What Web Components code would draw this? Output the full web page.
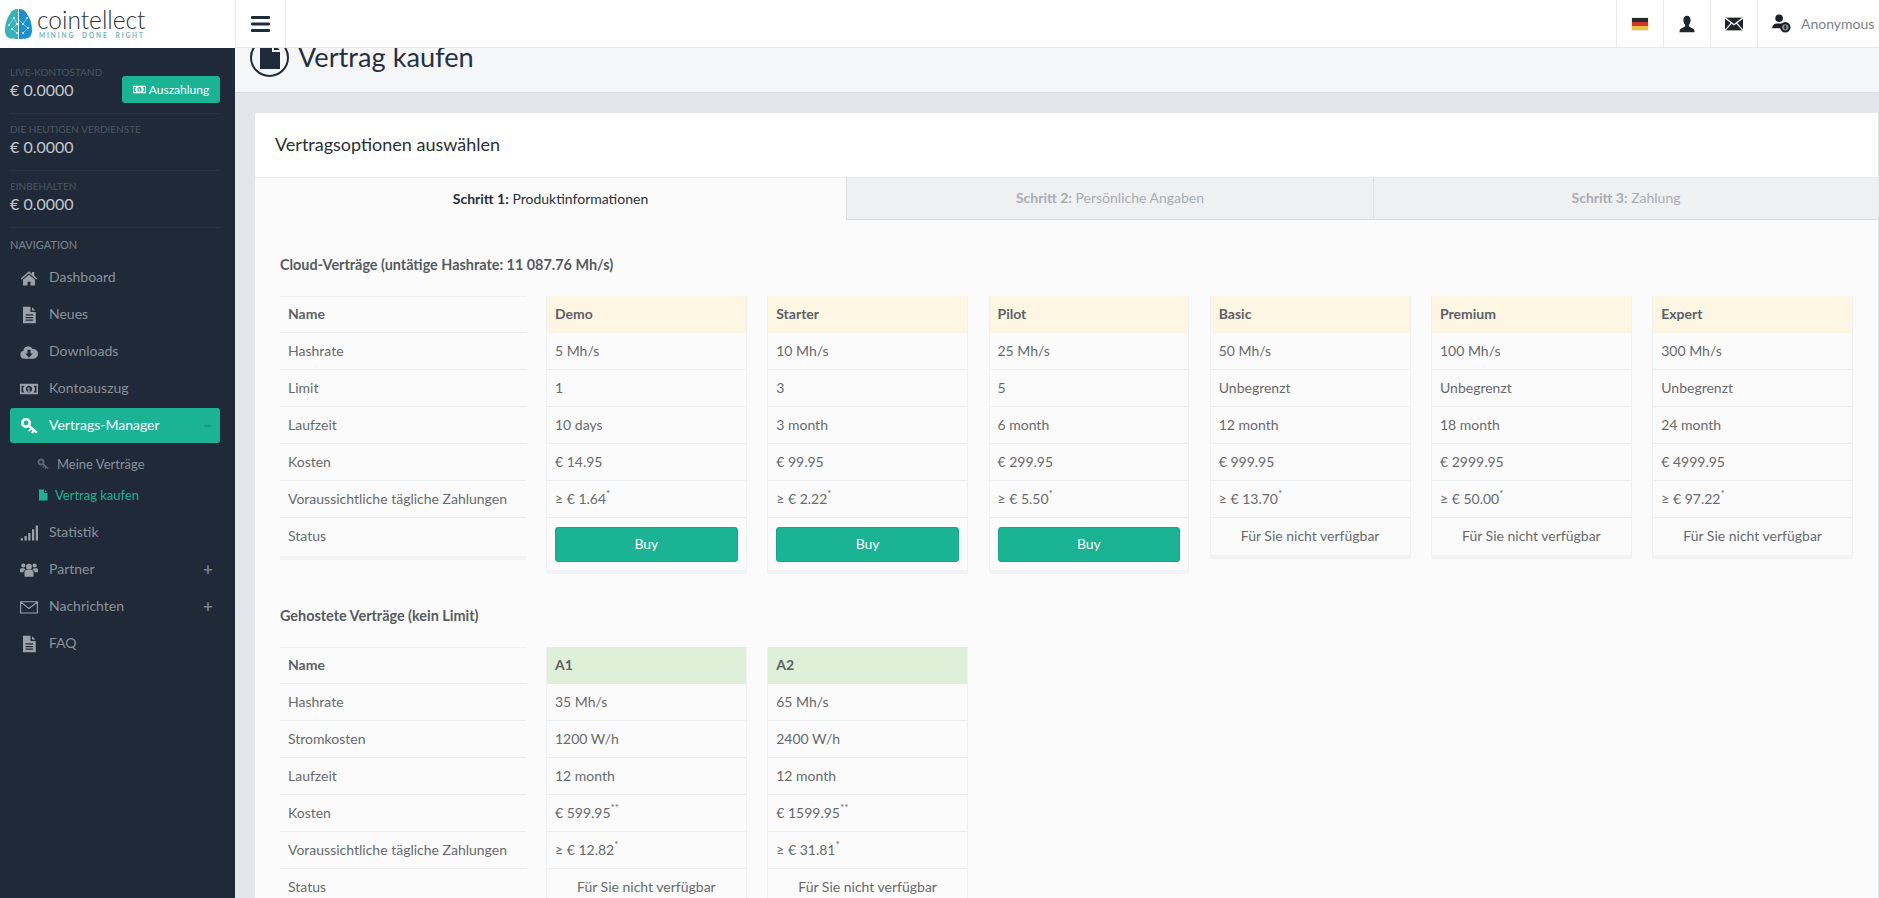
<!DOCTYPE html>
<html lang="de">
<head>
<meta charset="utf-8">
<title>Vertrag kaufen</title>
<style>
    html, body { margin: 0; height: 100%; overflow: hidden; }
    body { font-family: Lato, "Open Sans", sans-serif; font-size: 14px; color: #676a6c; }
</style>
</head>
<body>
<ci-app></ci-app>

<script>
const ICONS = {
    home: '<path d="M12 3 1 12.6l1.3 1.500L12 5.800l9.700 8.300 1.300-1.500-4-3.500V4h-3v2.800z"/><path d="M12 7.600 4 14.400V22h6v-5h4v5h6v-7.600z"/>',
    file: '<path fill-rule="evenodd" d="M4 1h10v7h7v15H4zM16 1.500 20.500 6H16zM7.500 11v1.800h10V11zm0 3.500v1.800h10v-1.800zm0 3.500v1.800h10V18z"/>',
    plainfile: '<path d="M4 1h10v7h7v15H4zM16 1.500 20.500 6H16z"/>',
    cloud: '<path fill-rule="evenodd" d="M6 21a5.500 5.500 0 0 1-1.500-10.800A6.500 6.500 0 0 1 16.700 8 6.500 6.500 0 0 1 18.500 21zM10 9v5H7l5 5.500 5-5.500h-3V9z"/>',
    money: '<path fill-rule="evenodd" d="M0 5h24v14H0zM2 7.500v9h4a6 6 0 0 1 0-9zM22 7.500h-4a6 6 0 0 1 0 9h4zM12 7.500a4 4.500 0 1 0 .01 0zM11 10h1.800v4.500h1v1h-3.800v-1h1v-3l-1 .6-.5-.9z"/>',
    key: '<g fill="none" stroke="currentColor" stroke-linecap="round"><circle cx="8" cy="8" r="5" stroke-width="3.600"/><path stroke-width="3.200" d="M11.500 11.500 21.500 20"/><path stroke-width="2.600" d="M15 15l-2.500 3M18.500 17.800l-2 2.700"/></g>',
    bars: '<rect x="1" y="19" width="3" height="3"/><rect x="6" y="16" width="3" height="6"/><rect x="11" y="12" width="3" height="10"/><rect x="16" y="7" width="3" height="15"/><rect x="21" y="2" width="3" height="20"/>',
    users: '<circle cx="12" cy="7.500" r="3.800"/><circle cx="4.500" cy="6" r="2.800"/><circle cx="19.500" cy="6" r="2.800"/><path d="M6 21v-5.500c0-2.500 1.500-3.700 3-3.700h6c1.500 0 3 1.200 3 3.700V21z"/><path d="M0 15v-3.500C0 10 1 9.500 2.500 9.500h3.300c.3 1 .9 1.800 1.700 2.300C5.500 12.300 4.600 13.500 4.500 15zM24 15v-3.500c0-1.500-1-2-2.500-2h-3.300c-.3 1-.9 1.800-1.700 2.300 2 .5 2.900 1.700 3 3.200z"/>',
    envelope: '<path fill="none" stroke="currentColor" stroke-width="1.500" d="M.8 5h22.400v15H.8zM1 5.500l11 8.500 11-8.500"/>',
    person: '<path d="M12 1c3 0 4.800 2.300 4.800 5.500 0 2.500-1 5-2.300 6.500v1.800c0 1 2 1.600 4.500 2.700 2 .9 3 1.700 3 5.500H2c0-3.800 1-4.600 3-5.500 2.500-1.100 4.500-1.700 4.500-2.700V13C8.200 11.500 7.200 9 7.200 6.500 7.200 3.300 9 1 12 1z"/>',
    mail: '<path d="M0 3.500h24v17H0z"/><path fill="none" stroke="#fff" stroke-width="1.700" d="M0 3.800 12 13 24 3.800M0 20.500l8.800-10M24 20.500l-8.800-10"/>'
};

function icon(name, size) {
    return `<svg viewBox="0 0 24 24" width="${size}" height="${size}" fill="currentColor">${ICONS[name]}</svg>`;
}

class CiLogo extends HTMLElement {
    constructor() {
        super();
        this.attachShadow({ mode: 'open' });
        this.shadowRoot.innerHTML = `
        <style>
            :host { display: flex; align-items: center; width: 235px; height: 48px; box-sizing: border-box; padding-left: 5px; gap: 5px; background: #fff; }
            .words { display: flex; flex-direction: column; margin-top: -2px; }
            .name { font-size: 24.500px; font-weight: 300; line-height: 24px; color: #2b3038; }
            .tag { font-size: 6.500px; line-height: 7px; letter-spacing: 1.900px; color: #6fb4bd; margin-left: 2px; white-space: pre; font-weight: 700; }
        </style>
        <svg width="27" height="30" viewBox="0 0 27 30">
            <path d="M13 0C9 0 6.500 1.800 5 5 2 9 0 15 0 21c0 5 2 8 6 8.500 3 .4 7 .5 7 .5z" fill="#34b3b8"/>
            <path d="M14 0c4 0 6.500 1.800 8 5 3 4 5 10 5 16 0 5-2 8-6 8.500-3 .4-7 .5-7 .5z" fill="#1b8fcf"/>
            <g stroke="#bfe9ee" stroke-width=".6" fill="none">
                <path d="M4 16 9 9l3 6-5 5 5 4M22 9l-4 6 5 4-5 5M14 11l4 4"/>
            </g>
            <g fill="#dff6f8">
                <circle cx="9" cy="9" r="1"/><circle cx="4" cy="16" r="1"/><circle cx="12" cy="15" r="1"/><circle cx="7" cy="20" r="1"/><circle cx="12" cy="24" r="1"/>
                <circle cx="22" cy="9" r="1"/><circle cx="18" cy="15" r="1"/><circle cx="23" cy="19" r="1"/><circle cx="18" cy="24" r="1"/>
            </g>
        </svg>
        <div class="words">
            <span class="name">cointellect</span>
            <span class="tag">MINING  DONE  RIGHT</span>
        </div>
        `;
    }
}

class CiTopbar extends HTMLElement {
    constructor() {
        super();
        this.attachShadow({ mode: 'open' });
        this.shadowRoot.innerHTML = `
        <style>
            :host { display: flex; height: 48px; box-sizing: border-box; background: #fff; position: relative; z-index: 2; }
            .line { display: flex; flex: 1; height: 48px; border-bottom: 1px solid #e7eaec; box-sizing: border-box; }
            .cell { display: flex; align-items: center; justify-content: center; width: 47px; box-sizing: border-box; border-left: 1px solid #e7eaec; color: #20242c; }
            .burger { width: 51px; border-right: 1px solid #e7eaec; }
            .burger i { display: block; width: 19px; height: 3px; border-radius: 1px; background: #1f2a3a; box-shadow: 0 6.500px 0 #1f2a3a, 0 13px 0 #1f2a3a; margin-top: -13px; }
            .space { flex: 1; }
            .user { width: 122px; justify-content: flex-start; padding-left: 14px; gap: 10px; color: #7b8188; font-size: 14px; }
            .flag { width: 16px; height: 12px; background: linear-gradient(#2a2a2a 0 33%, #d5322a 33% 66%, #eec13d 66%); box-shadow: 0 0 1px #8b7b55; }
            .user svg { color: #1c2028; flex: none; }
        </style>
        <slot name="logo"></slot>
        <div class="line">
            <div class="cell burger"><i></i></div>
            <div class="space"></div>
            <div class="cell"><span class="flag"></span></div>
            <div class="cell">${icon('person', 18)}</div>
            <div class="cell">${icon('mail', 18)}</div>
            <div class="cell user">
                <svg viewBox="0 0 20 20" width="19" height="19" fill="currentColor">
                    <circle cx="7.500" cy="4.500" r="4"/>
                    <path d="M0 15c.3-3 2.500-5 5-5h5c1 0 1.800.3 2.500.8A6 6 0 0 0 9 15z"/>
                    <circle cx="14" cy="14" r="5.500"/>
                    <circle cx="14" cy="14" r="3.300" fill="#8f949a"/>
                    <rect x="13" y="12" width="2" height="4" fill="#1c2028"/>
                </svg>
                <span>Anonymous</span>
            </div>
        </div>
        `;
    }
}

class CiStat extends HTMLElement {
    constructor() {
        super();
        this.attachShadow({ mode: 'open' });
        this.shadowRoot.innerHTML = `
        <style>
            :host { display: flex; align-items: flex-start; justify-content: space-between; height: 57px; box-sizing: border-box; border-bottom: 1px solid #273345; padding-top: 9px; }
            .label { font-size: 10px; line-height: 12px; color: #4a5666; }
            .value { font-size: 16px; line-height: 22px; margin-top: 1px; color: #c3c7cd; }
        </style>
        <div>
            <div class="label">${this.getAttribute('label')}</div>
            <div class="value">${this.getAttribute('value')}</div>
        </div>
        <slot></slot>
        `;
    }
}

class CiButton extends HTMLElement {
    constructor() {
        super();
        this.attachShadow({ mode: 'open' });
        this.shadowRoot.innerHTML = `
        <style>
            :host { display: inline-flex; align-items: center; justify-content: center; background: #1ab394; color: #fff; border-radius: 3px; box-sizing: border-box; font-size: 14px; }
            :host([small]) { width: 98px; height: 27px; gap: 3px; font-size: 12px; margin-top: 10px; }
            :host([block]) { display: flex; height: 35px; margin: 9px 8px 8px; border: 1px solid #18a689; padding-bottom: 2px; }
        </style>
        <slot></slot>
        `;
    }
}

class CiNavItem extends HTMLElement {
    constructor() {
        super();
        this.attachShadow({ mode: 'open' });
        const trail = this.getAttribute('trail') || '';
        this.shadowRoot.innerHTML = `
        <style>
            :host { display: flex; align-items: center; height: 37px; padding-left: 10px; width: 210px; box-sizing: border-box; color: #8a929c; font-size: 14px; }
            :host([active]) { height: 35px; margin: 1px 0; background: #1ab394; color: #fff; border-radius: 3px; }
            :host([sub]) { height: 31px; padding-left: 27px; font-size: 13px; }
            :host([sub][current]) { color: #1ab394; }
            .ico { display: flex; width: 29px; flex: none; justify-content: flex-start; margin-top: 1px; color: #9aa1aa; }
            :host([active]) .ico { color: #fff; }
            :host([sub]) .ico { width: 20px; color: #5d6672; }
            :host([sub][current]) .ico { width: 18px; color: #1ab394; }
            .text { flex: 1; margin-top: -2px; }
            :host([sub]) .text { margin-top: 0; }
            .trail { width: 17px; font-size: 17px; font-weight: 700; line-height: 1; color: #777f89; margin-top: -2px; }
            :host([active]) .trail { color: #18957e; }
        </style>
        <span class="ico">${icon(this.getAttribute('icon'), this.hasAttribute('sub') ? 12 : 18)}</span>
        <span class="text"><slot></slot></span>
        <span class="trail">${trail}</span>
        `;
    }
}

class CiSidebar extends HTMLElement {
    constructor() {
        super();
        this.attachShadow({ mode: 'open' });
        this.shadowRoot.innerHTML = `
        <style>
            :host { display: block; background: #1f2937; padding: 9px 15px 0 10px; overflow: hidden; box-sizing: border-box; }
            .head { font-size: 11px; color: #7c8590; line-height: 14px; padding: 10px 0 7px; }
        </style>
        <slot name="stats"></slot>
        <div class="head">NAVIGATION</div>
        <slot></slot>
        `;
    }
}

class CiNavGroup extends HTMLElement {
    constructor() {
        super();
        this.attachShadow({ mode: 'open' });
        this.shadowRoot.innerHTML = `
        <style>
            :host { display: flex; flex-direction: column; padding: 4px 0; }
        </style>
        <slot></slot>
        `;
    }
}

class CiHeading extends HTMLElement {
    constructor() {
        super();
        this.attachShadow({ mode: 'open' });
        this.shadowRoot.innerHTML = `
        <style>
            :host { display: block; height: 44px; overflow: hidden; background: #f5f6f7; border-bottom: 1px solid #d9dde1; flex: none; }
            .row { display: flex; align-items: center; gap: 9px; height: 40px; margin: -11px 0 0 15px; }
            .round { width: 39px; height: 39px; border: 2px solid #1f2a3a; border-radius: 50%; box-sizing: border-box; display: flex; align-items: center; justify-content: center; color: #1f2a3a; flex: none; }
            h1 { margin: 0; font-size: 27.200px; line-height: 18px; font-weight: 400; color: #26303e; }
        </style>
        <div class="row">
            <span class="round"><svg viewBox="0 0 20 24" width="20" height="24" fill="currentColor"><path d="M0 0h12v7h8v17H0zM14 0l6 5h-6z"/></svg></span>
            <h1><slot></slot></h1>
        </div>
        `;
    }
}

class CiTabs extends HTMLElement {
    constructor() {
        super();
        this.attachShadow({ mode: 'open' });
        this.shadowRoot.innerHTML = `
        <style>
            :host { display: grid; grid-template-columns: 591px 527px 1fr; height: 42px; font-size: 14px; }
            div { display: flex; align-items: center; justify-content: center; box-sizing: border-box; padding-bottom: 2px; background: #eef0f2; color: #a9adb2; border-bottom: 1px solid #d8dbde; border-left: 1px solid #dfe2e5; }
            b { font-weight: 700; }
            .on { background: transparent; color: #2a2f36; border: 0; }
        </style>
        <div class="on"><span><b>Schritt 1:</b> Produktinformationen</span></div>
        <div><span><b>Schritt 2:</b> Persönliche Angaben</span></div>
        <div><span><b>Schritt 3:</b> Zahlung</span></div>
        `;
    }
}

class CiPlan extends HTMLElement {
    constructor() {
        super();
        this.attachShadow({ mode: 'open' });
        const rows = JSON.parse(this.getAttribute('rows'));
        const kind = this.getAttribute('kind');
        const cells = rows.map(r => `<div class="cell">${r}</div>`).join('');
        let status = '<div class="cell none">Für Sie nicht verfügbar</div>';
        if (this.hasAttribute('buy')) {
            status = '<div class="buy"><slot></slot></div>';
        }
        this.shadowRoot.innerHTML = `
        <style>
            :host { display: block; align-self: start; box-sizing: border-box; border: 1px solid #f0f1f2; border-top: 0; border-bottom: 4px solid #f2f3f4; }
            .cell { height: 37px; box-sizing: border-box; padding: 0 8px; line-height: 36px; border-bottom: 1px solid #ebeced; white-space: nowrap; }
            .name { font-weight: 700; color: #5d6166; border-bottom: 0; }
            .kind-yellow { background: #fdf6e3; }
            .kind-green { background: #dff0d8; }
            .none { text-align: center; border-bottom: 0; }
            .buy { height: 52px; display: flow-root; }
            sup { font-size: 10px; line-height: 0; position: relative; top: -1px; vertical-align: super; }
        </style>
        <div class="cell name kind-${kind}">${this.getAttribute('name')}</div>
        ${cells}
        ${status}
        `;
    }
}

class CiLabels extends HTMLElement {
    constructor() {
        super();
        this.attachShadow({ mode: 'open' });
        const rows = this.getAttribute('rows').split('|');
        this.shadowRoot.innerHTML = `
        <style>
            :host { display: block; align-self: start; border-top: 1px solid #eff0f1; border-bottom: 4px solid #f2f3f4; }
            div { height: 37px; box-sizing: border-box; padding: 0 8px; line-height: 36px; border-bottom: 1px solid #ebeced; white-space: nowrap; }
            div:first-of-type { font-weight: 700; color: #5d6166; height: 36px; line-height: 34px; }
            div:last-child { border-bottom: 0; height: 38px; }
        </style>
        ${rows.map(r => `<div>${r}</div>`).join('')}
        `;
    }
}

class CiSection extends HTMLElement {
    constructor() {
        super();
        this.attachShadow({ mode: 'open' });
        this.shadowRoot.innerHTML = `
        <style>
            :host { display: block; }
            h2 { margin: 0; font-size: 14.400px; line-height: 18px; font-weight: 700; color: #555a60; padding-bottom: 22px; }
            .grid { display: grid; grid-template-columns: 245.500px repeat(6, 1fr); column-gap: 20.500px; }
        </style>
        <h2>${this.getAttribute('title')}</h2>
        <div class="grid"><slot></slot></div>
        `;
    }
}

class CiCard extends HTMLElement {
    constructor() {
        super();
        this.attachShadow({ mode: 'open' });
        this.shadowRoot.innerHTML = `
        <style>
            :host { display: block; background: #fbfbfb; border-radius: 3px 3px 0 0; overflow: hidden; }
            header { height: 65px; box-sizing: border-box; background: #fff; border-bottom: 1px solid #e7eaec; padding: 0 20px 2px; display: flex; align-items: center; font-size: 18px; color: #2a2f36; }
            .body { padding: 36px 25px 0; display: flex; flex-direction: column; gap: 33px; }
        </style>
        <header>${this.getAttribute('title')}</header>
        <slot name="tabs"></slot>
        <div class="body"><slot></slot></div>
        `;
    }
}

class CiApp extends HTMLElement {
    constructor() {
        super();
        this.attachShadow({ mode: 'open' });
        const labelsA = 'Name|Hashrate|Limit|Laufzeit|Kosten|Voraussichtliche tägliche Zahlungen|Status';
        const labelsB = 'Name|Hashrate|Stromkosten|Laufzeit|Kosten|Voraussichtliche tägliche Zahlungen|Status';
        const plan = (name, kind, rows, buy) => {
            const json = JSON.stringify(rows).replace(/"/g, '&quot;');
            return `<ci-plan name="${name}" kind="${kind}" rows="${json}" ${buy ? 'buy' : ''}>${buy ? '<ci-button block>Buy</ci-button>' : ''}</ci-plan>`;
        };
        this.shadowRoot.innerHTML = `
        <style>
            :host { display: grid; grid-template-columns: 235px 1fr; grid-template-rows: 48px 1fr; height: 100vh; overflow: hidden; }
            ci-topbar { grid-column: 1 / 3; }
            main { display: flex; flex-direction: column; background: #e3e7eb; overflow: hidden; min-width: 0; }
            .wrap { padding: 20px 1px 0 20px; }
        </style>
        <ci-topbar><ci-logo slot="logo"></ci-logo></ci-topbar>
        <ci-sidebar>
            <div slot="stats">
                <ci-stat label="LIVE-KONTOSTAND" value="€ 0.0000"><ci-button small>${icon('money', 13)}Auszahlung</ci-button></ci-stat>
                <ci-stat label="DIE HEUTIGEN VERDIENSTE" value="€ 0.0000"></ci-stat>
                <ci-stat label="EINBEHALTEN" value="€ 0.0000"></ci-stat>
            </div>
            <ci-nav-item icon="home">Dashboard</ci-nav-item>
            <ci-nav-item icon="file">Neues</ci-nav-item>
            <ci-nav-item icon="cloud">Downloads</ci-nav-item>
            <ci-nav-item icon="money">Kontoauszug</ci-nav-item>
            <ci-nav-item icon="key" active trail="–">Vertrags-Manager</ci-nav-item>
            <ci-nav-group>
                <ci-nav-item icon="key" sub>Meine Verträge</ci-nav-item>
                <ci-nav-item icon="plainfile" sub current>Vertrag kaufen</ci-nav-item>
            </ci-nav-group>
            <ci-nav-item icon="bars">Statistik</ci-nav-item>
            <ci-nav-item icon="users" trail="+">Partner</ci-nav-item>
            <ci-nav-item icon="envelope" trail="+">Nachrichten</ci-nav-item>
            <ci-nav-item icon="file">FAQ</ci-nav-item>
        </ci-sidebar>
        <main>
            <ci-heading>Vertrag kaufen</ci-heading>
            <div class="wrap">
                <ci-card title="Vertragsoptionen auswählen">
                    <ci-tabs slot="tabs"></ci-tabs>
                    <ci-section title="Cloud-Verträge (untätige Hashrate: 11 087.76 Mh/s)">
                        <ci-labels rows="${labelsA}"></ci-labels>
                        ${plan('Demo', 'yellow', ['5 Mh/s', '1', '10 days', '€ 14.95', '≥ € 1.64<sup>*</sup>'], true)}
                        ${plan('Starter', 'yellow', ['10 Mh/s', '3', '3 month', '€ 99.95', '≥ € 2.22<sup>*</sup>'], true)}
                        ${plan('Pilot', 'yellow', ['25 Mh/s', '5', '6 month', '€ 299.95', '≥ € 5.50<sup>*</sup>'], true)}
                        ${plan('Basic', 'yellow', ['50 Mh/s', 'Unbegrenzt', '12 month', '€ 999.95', '≥ € 13.70<sup>*</sup>'])}
                        ${plan('Premium', 'yellow', ['100 Mh/s', 'Unbegrenzt', '18 month', '€ 2999.95', '≥ € 50.00<sup>*</sup>'])}
                        ${plan('Expert', 'yellow', ['300 Mh/s', 'Unbegrenzt', '24 month', '€ 4999.95', '≥ € 97.22<sup>*</sup>'])}
                    </ci-section>
                    <ci-section title="Gehostete Verträge (kein Limit)">
                        <ci-labels rows="${labelsB}"></ci-labels>
                        ${plan('A1', 'green', ['35 Mh/s', '1200 W/h', '12 month', '€ 599.95<sup>**</sup>', '≥ € 12.82<sup>*</sup>'])}
                        ${plan('A2', 'green', ['65 Mh/s', '2400 W/h', '12 month', '€ 1599.95<sup>**</sup>', '≥ € 31.81<sup>*</sup>'])}
                    </ci-section>
                </ci-card>
            </div>
        </main>
        `;
    }
}

customElements.define('ci-logo', CiLogo);
customElements.define('ci-topbar', CiTopbar);
customElements.define('ci-stat', CiStat);
customElements.define('ci-button', CiButton);
customElements.define('ci-nav-item', CiNavItem);
customElements.define('ci-nav-group', CiNavGroup);
customElements.define('ci-sidebar', CiSidebar);
customElements.define('ci-heading', CiHeading);
customElements.define('ci-tabs', CiTabs);
customElements.define('ci-plan', CiPlan);
customElements.define('ci-labels', CiLabels);
customElements.define('ci-section', CiSection);
customElements.define('ci-card', CiCard);
customElements.define('ci-app', CiApp);
</script>
</body>
</html>
